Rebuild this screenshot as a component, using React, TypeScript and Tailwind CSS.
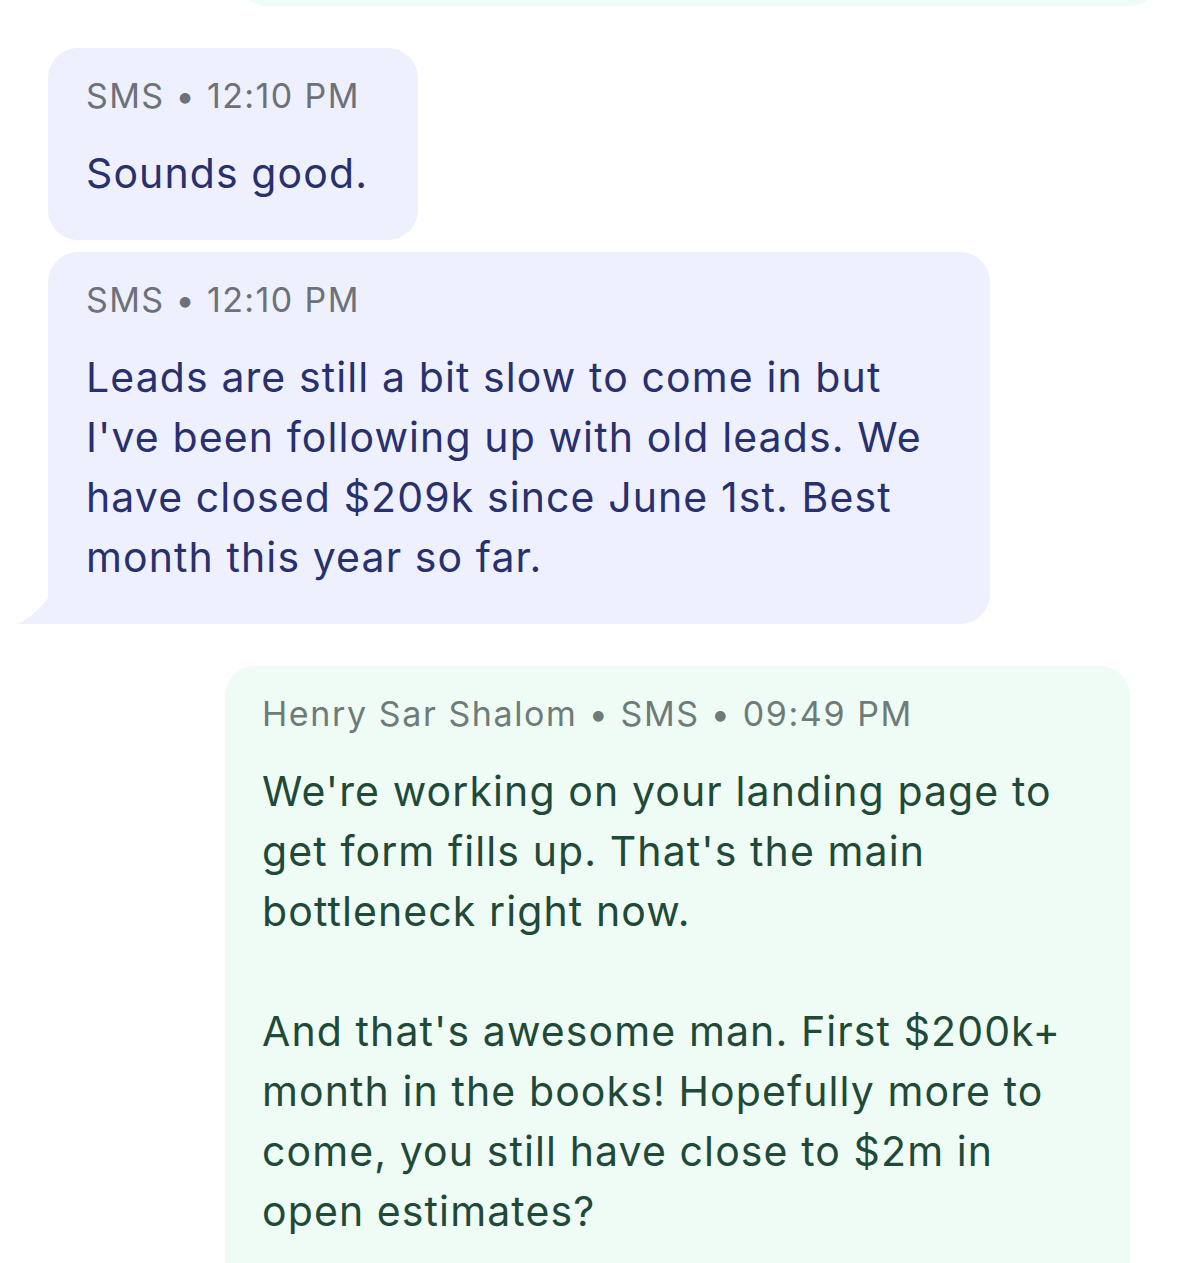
const inbound = 'text-[#28306e]';

type BubbleProps = {
  meta: string;
  lines: string[];
  tail?: boolean;
  className?: string;
};

function InboundBubble({ meta, lines, tail, className }: BubbleProps) {
  return (
    <div className={`relative self-start ${className ?? ''}`}>
      <div
        className={[
          'rounded-[30px] bg-[#eef0fd] pl-[38px] pr-[40px] pt-[28px] pb-[37px]',
          tail ? 'rounded-bl-none' : '',
        ].join(' ')}
      >
        <p className="text-[34px] leading-[40px] tracking-[1.4px] text-[#6d717a]">{meta}</p>
        <p className={`mt-[27px] text-[41px] leading-[60px] tracking-[1.1px] ${inbound}`}>
          {lines.map((line, i) => (
            <span key={i} className="block">
              {line}
            </span>
          ))}
        </p>
      </div>
      {tail ? (
        <svg
          className="absolute bottom-0 left-[-30px]"
          width="31"
          height="27"
          viewBox="0 0 31 27"
        >
          <path d="M0 27 C 10 22, 22 12, 31 0 L31 27 Z" fill="#eef0fd" />
        </svg>
      ) : null}
    </div>
  );
}

export default function App() {
  return (
    <div
      className="h-[1263px] w-[1179px] overflow-hidden bg-white"
      style={{ fontFamily: 'Inter, "Noto Sans", sans-serif' }}
    >
      <div className="ml-[236px] mr-[19px] mt-[-60px] h-[66px] rounded-[30px] bg-[#effcf5]" />

      <div className="flex flex-col pl-[48px]">
        <InboundBubble
          className="mt-[42px] w-[370px]"
          meta="SMS • 12:10 PM"
          lines={['Sounds good.']}
        />
        <InboundBubble
          className="mt-[12px] w-[942px]"
          tail
          meta="SMS • 12:10 PM"
          lines={[
            'Leads are still a bit slow to come in but',
            "I've been following up with old leads. We",
            'have closed $209k since June 1st. Best',
            'month this year so far.',
          ]}
        />
      </div>

      <div className="ml-[225px] mt-[42px] w-[905px] rounded-t-[30px] bg-[#effcf5] pl-[37px] pr-[30px] pt-[28px] pb-[40px]">
        <p className="text-[34px] leading-[40px] tracking-[1.6px] text-[#6e7b77]">
          Henry Sar Shalom • SMS • 09:49 PM
        </p>
        <div className="mt-[27px] text-[41px] leading-[60px] tracking-[1.1px] text-[#1f4a38]">
          <p>We're working on your landing page to</p>
          <p>get form fills up. That's the main</p>
          <p>bottleneck right now.</p>
          <p className="h-[60px]" />
          <p>And that's awesome man. First $200k+</p>
          <p>month in the books! Hopefully more to</p>
          <p>come, you still have close to $2m in</p>
          <p>open estimates?</p>
        </div>
      </div>
    </div>
  );
}
